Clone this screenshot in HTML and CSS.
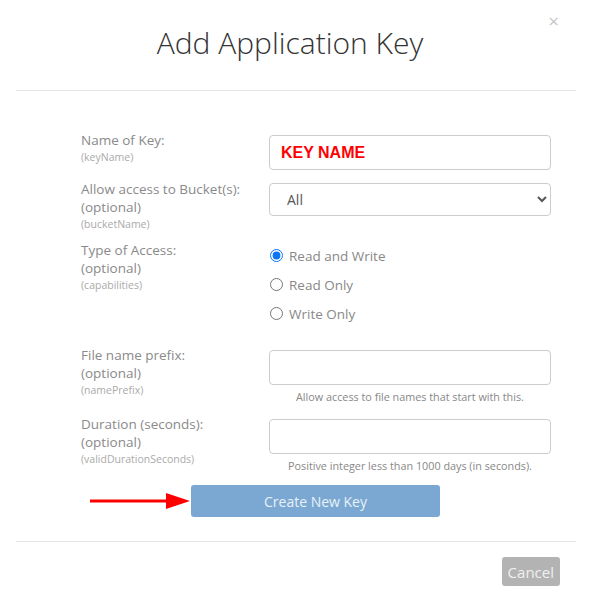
FILE: index.html
```html
<!DOCTYPE html>
<html lang="en">
<head>
    <meta charset="UTF-8">
    <meta name="viewport" content="width=device-width, initial-scale=1.0">
    <title>Add Application Key</title>
    <link rel="stylesheet" href="styles.css">
</head>
<body>
    <div class="modal">
        <div class="modal-header">
            <h2>Add Application Key</h2>
            <span class="close">&times;</span>
        </div>
        <div class="modal-body">
            <form class="key-form">
                <div class="form-row">
                    <label class="field-label">Name of Key:<small>(keyName)</small></label>
                    <div class="field">
                        <input type="text" class="text-input key-name" value="KEY NAME">
                    </div>
                </div>
                <div class="form-row bucket-row">
                    <label class="field-label">Allow access to Bucket(s):<br>(optional)<small>(bucketName)</small></label>
                    <div class="field select-field">
                        <select class="select-input">
                            <option>All</option>
                        </select>
                    </div>
                </div>
                <div class="form-row radio-row">
                    <label class="field-label">Type of Access:<br>(optional)<small>(capabilities)</small></label>
                    <div class="field radio-group">
                        <label class="radio"><input type="radio" name="cap" checked> Read and Write</label>
                        <label class="radio"><input type="radio" name="cap"> Read Only</label>
                        <label class="radio"><input type="radio" name="cap"> Write Only</label>
                    </div>
                </div>
                <div class="form-row prefix-row">
                    <label class="field-label">File name prefix:<br>(optional)<small>(namePrefix)</small></label>
                    <div class="field">
                        <input type="text" class="text-input">
                        <p class="help">Allow access to file names that start with this.</p>
                    </div>
                </div>
                <div class="form-row">
                    <label class="field-label">Duration (seconds):<br>(optional)<small>(validDurationSeconds)</small></label>
                    <div class="field">
                        <input type="text" class="text-input">
                        <p class="help">Positive integer less than 1000 days (in seconds).</p>
                    </div>
                </div>
                <div class="submit-row">
                    <svg class="arrow" width="101" height="18" viewBox="0 0 101 18">
                        <rect x="0" y="7.5" width="78" height="3" fill="#ff0000"/>
                        <polygon points="76,1 100,9 76,17" fill="#ff0000"/>
                    </svg>
                    <button type="submit" class="btn-create">Create New Key</button>
                </div>
            </form>
        </div>
        <div class="modal-footer">
            <button type="button" class="btn-cancel">Cancel</button>
        </div>
    </div>
</body>
</html>
```

FILE: styles.css
```css
* {
    margin: 0;
    padding: 0;
    box-sizing: border-box;
}

body {
    font-family: 'Open Sans', sans-serif;
    background-color: #fff;
    color: #888;
}

.modal {
    width: 593px;
    padding: 0 17px 0 16px;
}

/* header */
.modal-header {
    position: relative;
    height: 91px;
    border-bottom: 1px solid #e5e5e5;
    text-align: center;
    padding-top: 23px;
    padding-right: 12px;
}

.modal-header h2 {
    font-size: 30px;
    font-weight: 300;
    color: #333;
    line-height: 40px;
}

.close {
    position: absolute;
    top: 9px;
    right: 17px;
    font-size: 19px;
    color: #c8c8c8;
    line-height: 24px;
}

/* form */
.modal-body {
    padding: 40px 25px 24px 65px;
    border-bottom: 1px solid #e5e5e5;
}

.form-row {
    display: grid;
    grid-template-columns: 180px 282px;
    column-gap: 8px;
    margin-bottom: 10px;
}

.bucket-row {
    margin-bottom: 9px;
}

.radio-row {
    margin-bottom: 18px;
}

.prefix-row {
    margin-bottom: 11px;
}

.field-label {
    font-size: 13.5px;
    line-height: 18px;
    color: #8a8a8a;
}

.field-label small {
    display: block;
    font-size: 10.5px;
    line-height: 16px;
    color: #aaa;
}

.field {
    padding-top: 4px;
}

.select-field {
    padding-top: 3px;
}

.radio-group {
    padding-top: 0;
}

.text-input {
    width: 100%;
    height: 35px;
    border: 1px solid #ccc;
    border-radius: 4px;
    padding: 0 11px;
    font-family: 'Open Sans', sans-serif;
    font-size: 14px;
    color: #555;
    outline: none;
}

.key-name {
    font-family: 'Liberation Sans', Arial, sans-serif;
    font-weight: bold;
    font-size: 16px;
    color: #ff0000;
}

.select-input {
    width: 100%;
    height: 33px;
    border: 1px solid #ccc;
    border-radius: 4px;
    padding: 0 13px;
    font-family: 'Open Sans', sans-serif;
    font-size: 14px;
    color: #555;
    background: #fff;
}

.radio {
    display: flex;
    align-items: center;
    gap: 6px;
    height: 29px;
    font-size: 13.5px;
    color: #888;
}

.radio input {
    width: 13px;
    height: 13px;
    margin: 0 0 0 1px;
    accent-color: #0a75f5;
}

.help {
    text-align: center;
    font-size: 10.8px;
    line-height: 14px;
    color: #888;
    margin-top: 5px;
}

.submit-row {
    display: flex;
    align-items: center;
    margin: 12px 0 0 9px;
}

.arrow {
    display: block;
}

.btn-create {
    width: 249px;
    height: 32px;
    border: none;
    border-radius: 3px;
    background-color: #7aa8d2;
    color: #e9f1f8;
    font-family: 'Open Sans', sans-serif;
    font-size: 14px;
}

/* footer */
.modal-footer {
    display: flex;
    justify-content: flex-end;
    padding: 15px 16px 0 0;
}

.btn-cancel {
    height: 29px;
    padding: 0 6px;
    border: none;
    border-radius: 3px;
    background-color: #b3b3b3;
    color: #f0f0f0;
    font-family: 'Open Sans', sans-serif;
    font-size: 15px;
}
```
